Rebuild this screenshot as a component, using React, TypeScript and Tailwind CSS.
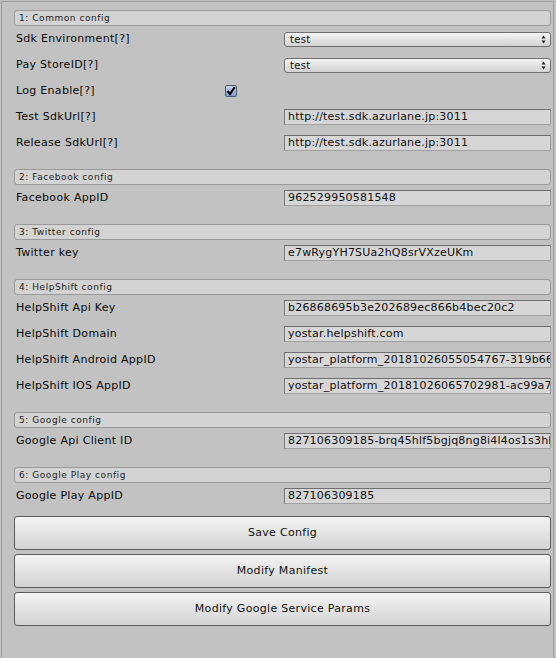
import React from 'react';

const font = { fontFamily: '"DejaVu Sans", Verdana, sans-serif' };

const SectionHeader: React.FC<{ title: string }> = ({ title }) => (
    <div className="h-4 rounded-[3px] border border-[#9a9a9a] bg-[#d3d3d3] pl-[4px] text-[9px] leading-[15px] tracking-[0.55px] text-[#1e1e1e]">
        {title}
    </div>
);

const TextField: React.FC<{ value: string }> = ({ value }) => (
    <div className="h-4 flex-1 overflow-hidden whitespace-nowrap border border-t-[#6e6e6e] border-l-[#7a7a7a] border-r-[#9a9a9a] border-b-[#a0a0a0] bg-[#d6d6d6] pl-[3px] text-[11px] leading-[14px] tracking-[0.2px] text-[#101010]">
        {value}
    </div>
);

const Popup: React.FC<{ value: string }> = ({ value }) => (
    <div className="flex h-[15px] flex-1 items-center justify-between rounded-[3px] border border-[#707070] bg-gradient-to-b from-[#f4f4f4] to-[#d2d2d2] pl-[5px] pr-[4px] text-[10px] tracking-[0.3px] text-[#111]">
        <span>{value}</span>
        <svg width="5" height="9" viewBox="0 0 5 9">
            <path d="M2.5 0.5 L4.5 3.5 L0.5 3.5 Z" fill="#222" />
            <path d="M2.5 8.5 L4.5 5.5 L0.5 5.5 Z" fill="#222" />
        </svg>
    </div>
);

const Row: React.FC<{ label: string; children: React.ReactNode }> = ({ label, children }) => (
    <div className="flex h-[26px] items-center pl-[2px]">
        <div className="w-[268px] text-[11px] tracking-[0.3px] text-[#0a0a0a]">{label}</div>
        {children}
    </div>
);

const Button: React.FC<{ label: string }> = ({ label }) => (
    <button className="h-[34px] w-full rounded-[3px] border border-[#5c5c5c] bg-gradient-to-b from-[#f4f4f4] to-[#d3d3d3] text-[11px] tracking-[0.3px] text-[#111]">
        {label}
    </button>
);

export default function App() {
    return (
        <div className="h-[658px] w-[556px] bg-[#c2c2c2] pt-px pl-px" style={font}>
            <div className="h-[657px] w-[553px] border-l border-t border-r border-[#9c9c9c] pl-[12px] pr-[2px] pt-[8px]">
                {/* 1: Common config */}
                <SectionHeader title="1: Common config" />
                <Row label="Sdk Environment[?]">
                    <Popup value="test" />
                </Row>
                <Row label="Pay StoreID[?]">
                    <Popup value="test" />
                </Row>
                <div className="flex h-[26px] items-center pl-[2px]">
                    <div className="w-[209px] text-[11px] tracking-[0.3px] text-[#0a0a0a]">Log Enable[?]</div>
                    <div className="flex h-3 w-3 items-center justify-center rounded-[2px] border border-[#4d5a70] bg-gradient-to-b from-[#c9d7ee] to-[#7f9cc9]">
                        <svg width="10" height="10" viewBox="0 0 10 10">
                            <path d="M1.5 5 L4 8 L8.8 1.2" fill="none" stroke="#000" strokeWidth="2" />
                        </svg>
                    </div>
                </div>
                <Row label="Test SdkUrl[?]">
                    <TextField value="http://test.sdk.azurlane.jp:3011" />
                </Row>
                <Row label="Release SdkUrl[?]">
                    <TextField value="http://test.sdk.azurlane.jp:3011" />
                </Row>

                {/* 2: Facebook config */}
                <div className="mt-[13px]">
                    <SectionHeader title="2: Facebook config" />
                    <Row label="Facebook AppID">
                        <TextField value="962529950581548" />
                    </Row>
                </div>

                {/* 3: Twitter config */}
                <div className="mt-[13px]">
                    <SectionHeader title="3: Twitter config" />
                    <Row label="Twitter key">
                        <TextField value="e7wRygYH7SUa2hQ8srVXzeUKm" />
                    </Row>
                </div>

                {/* 4: HelpShift config */}
                <div className="mt-[13px]">
                    <SectionHeader title="4: HelpShift config" />
                    <Row label="HelpShift Api Key">
                        <TextField value="b26868695b3e202689ec866b4bec20c2" />
                    </Row>
                    <Row label="HelpShift Domain">
                        <TextField value="yostar.helpshift.com" />
                    </Row>
                    <Row label="HelpShift Android AppID">
                        <TextField value="yostar_platform_20181026055054767-319b66" />
                    </Row>
                    <Row label="HelpShift IOS AppID">
                        <TextField value="yostar_platform_20181026065702981-ac99a7" />
                    </Row>
                </div>

                {/* 5: Google config */}
                <div className="mt-[13px]">
                    <SectionHeader title="5: Google config" />
                    <Row label="Google Api Client ID">
                        <TextField value="827106309185-brq45hlf5bgjq8ng8i4l4os1s3hk" />
                    </Row>
                </div>

                {/* 6: Google Play config */}
                <div className="mt-[13px]">
                    <SectionHeader title="6: Google Play config" />
                    <Row label="Google Play AppID">
                        <TextField value="827106309185" />
                    </Row>
                </div>

                {/* Actions */}
                <div className="mt-[7px] flex flex-col gap-1">
                    <Button label="Save Config" />
                    <Button label="Modify Manifest" />
                    <Button label="Modify Google Service Params" />
                </div>
            </div>
        </div>
    );
}
